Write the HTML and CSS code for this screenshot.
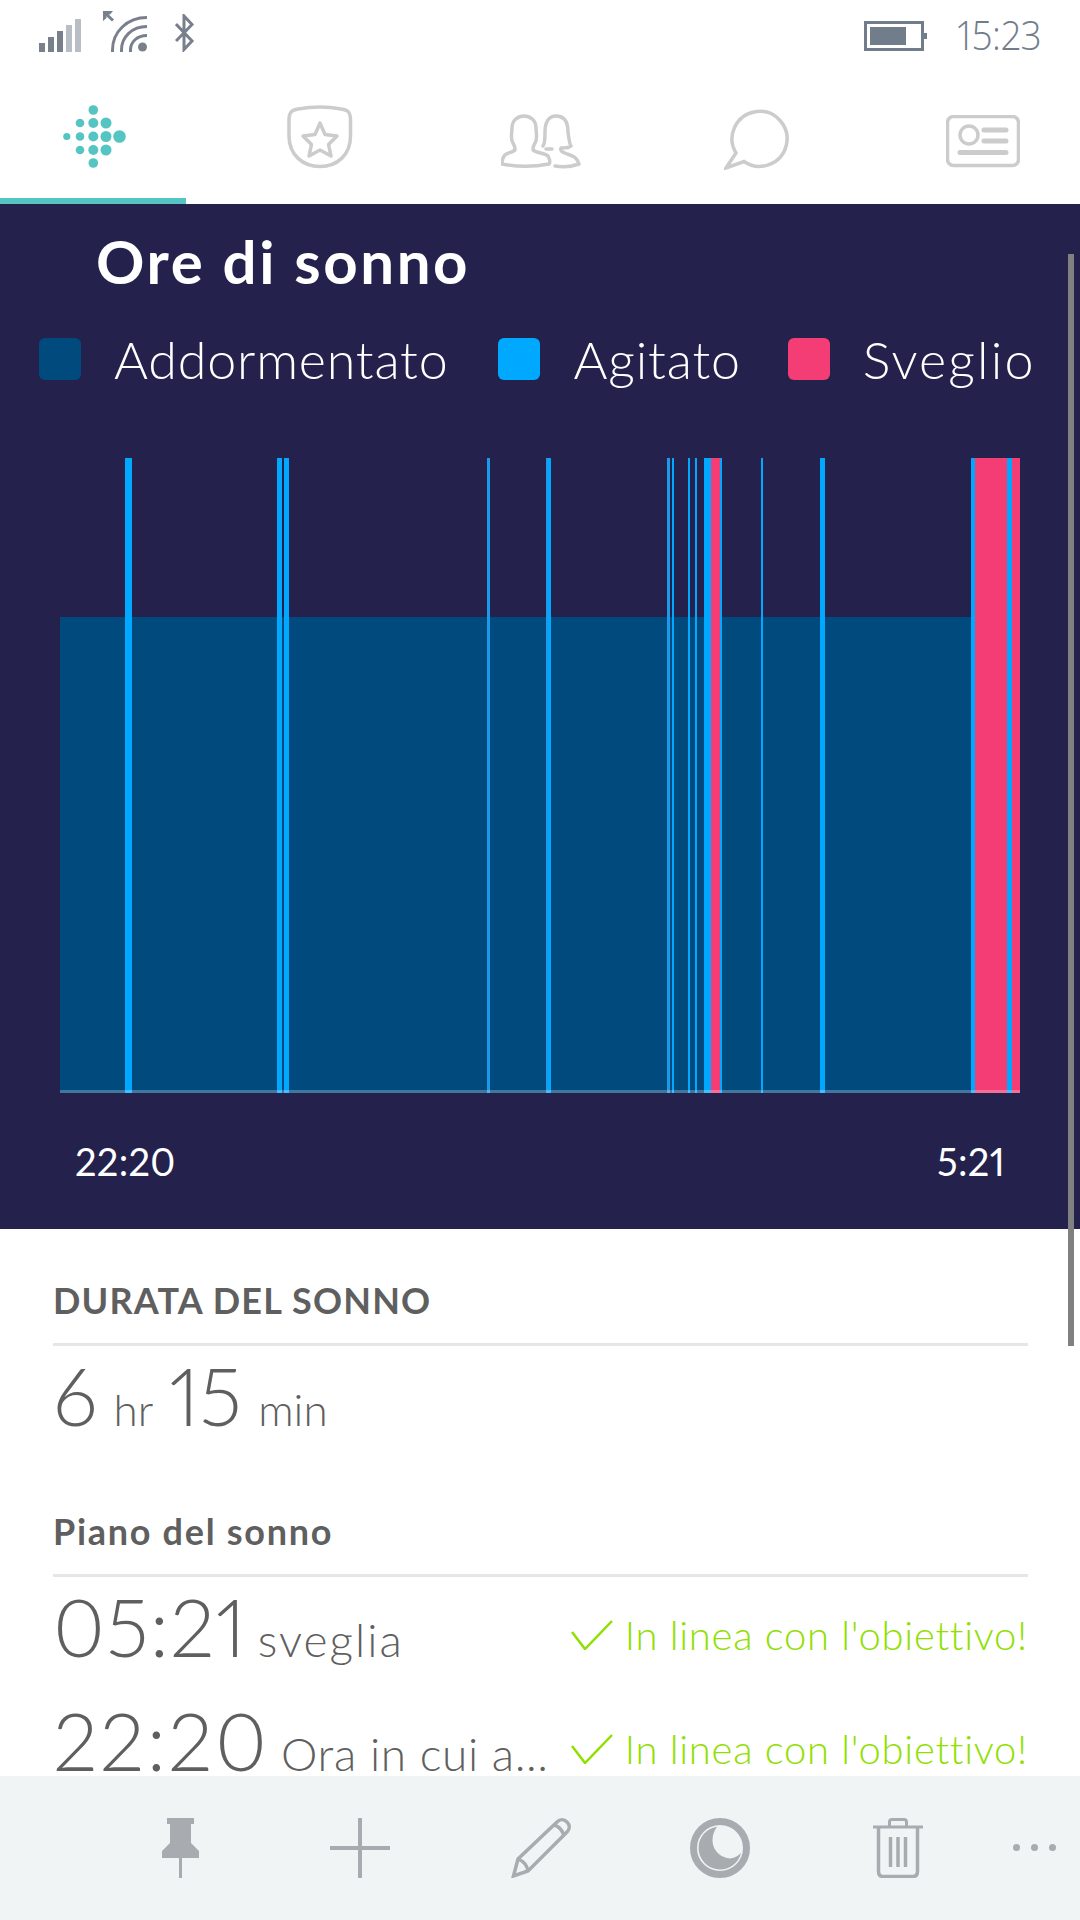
FILE: index.html
```html
<!DOCTYPE html>
<html lang="it">

<head>
  <meta charset="UTF-8" />
  <meta name="viewport" content="width=device-width, initial-scale=1.0" />
  <title>Ore di sonno</title>
  <link rel="stylesheet" href="styles.css">
</head>

<body>
  <div class="screen">
    <div class="status">
      <div class="status-left">
        <svg class="st-signal" width="42" height="33" viewBox="39 19 42 33">
          <rect x="39" y="43" width="6" height="9" fill="#78808c" />
          <rect x="48" y="37" width="6" height="15" fill="#78808c" />
          <rect x="57" y="31" width="6" height="21" fill="#78808c" />
          <rect x="66" y="25" width="6" height="27" fill="#b9bdc5" />
          <rect x="75" y="19" width="6" height="33" fill="#b9bdc5" />
        </svg>
        <svg class="st-wifi" width="46" height="42" viewBox="102 10 46 42">
          <path d="M103 21V11H113L110 14.5H106.5V18Z" fill="#78808c" />
          <path d="M104.5 12.5L113 20.5" stroke="#78808c" stroke-width="3" fill="none" />
          <g fill="none" stroke="#78808c" stroke-width="3">
            <path d="M112.5 52V50C112.500 32 127 17.500 147 17.500" />
            <path d="M121.500 52V50C121.500 37 132 26.500 147 26.500" />
            <path d="M130.500 52V50C130.500 42 137 35.500 147 35.500" />
          </g>
          <circle cx="142.500" cy="47" r="4.500" fill="#78808c" />
        </svg>
        <svg class="st-bt" width="20" height="38" viewBox="175 14 20 38">
          <path d="M176 24L192 41L184 49.500V16L192 24.500L176 41" fill="none" stroke="#78808c" stroke-width="3" />
        </svg>
      </div>
      <div class="status-right">
        <svg width="63" height="30" viewBox="864 21 63 30">
          <rect x="865.500" y="22.500" width="57" height="27" fill="none" stroke="#717d8a" stroke-width="3" />
          <rect x="870" y="27" width="36" height="18" fill="#717d8a" />
          <rect x="924" y="33" width="3" height="6" fill="#717d8a" />
        </svg>
        <span class="clock">15:23</span>
      </div>
    </div>

    <nav class="tabs">
      <div class="tab active">
        <svg width="66" height="66" viewBox="60 104 66 66" fill="#55c5c3">
          <circle cx="93.300" cy="110" r="4.800" />
          <circle cx="93.300" cy="123" r="5" />
          <circle cx="93.300" cy="136.500" r="5" />
          <circle cx="93.300" cy="150" r="5" />
          <circle cx="93.300" cy="163" r="4.800" />
          <circle cx="80" cy="123" r="4.300" />
          <circle cx="80" cy="136.500" r="4.300" />
          <circle cx="80" cy="150" r="4.300" />
          <circle cx="66.800" cy="136.500" r="3.600" />
          <circle cx="106" cy="123" r="5.500" />
          <circle cx="106" cy="136.500" r="5.500" />
          <circle cx="106" cy="150" r="5.500" />
          <circle cx="119.500" cy="136.500" r="6.300" />
        </svg>
      </div>
      <div class="tab">
        <svg width="66" height="65" viewBox="287 105 66 65" fill="none" stroke="#ccc" stroke-width="3.500" stroke-linejoin="round">
          <path d="M289 120C289 112 292 110 298 109C312 106.500 328 106.500 341 109C348 110 350.500 112 350.500 120V136C350.500 155 337 166.500 320 166.500C303 166.500 289 155 289 136Z" />
          <path d="M320 123L325 134.500L337 136L328.500 144.500L331 156L320 150L309 156L311.500 144.500L303 136L315 134.500Z" />
        </svg>
      </div>
      <div class="tab">
        <svg width="80" height="56" viewBox="502 114 80 56" fill="none" stroke="#ccc" stroke-width="3.500" stroke-linejoin="round" stroke-linecap="round">
          <path d="M516 150C516 147 516 146 514 143C511 139 513 133 513 128C513 120 519 116 525 116C531 116 537 120 537 128C537 133 539 139 536 143C534 146 534 147 534 150C537 153 546 153 549 156C551 160 551 163 550 164C535 167 518 167 503 164C503 160 504 157 506 155C508 153 512 153 516 150Z" />
          <path d="M544 146C546 144 546 138 546 132C546 122 550 116 557 116C565 116 569 122 569 132C570 140 571 145 572 146C570 148 566 148 562 148C561 151 563 152 568 154C574 156 578 157 580 164C572 167 563 167 556 166" />
          <path d="M547 149H553" />
        </svg>
      </div>
      <div class="tab">
        <svg width="66" height="61" viewBox="724 109 66 61" fill="none" stroke="#ccc" stroke-width="3.500">
          <path d="M736 153L726 168L744 161.500A27.500 27.500 0 1 0 736 153Z" stroke-linejoin="miter" />
        </svg>
      </div>
      <div class="tab">
        <svg width="74" height="55" viewBox="946 115 74 55" fill="none" stroke="#ccc">
          <rect x="947.500" y="116.500" width="71" height="49" rx="6" stroke-width="3.500" />
          <circle cx="969" cy="135" r="9" stroke-width="3.500" />
          <path d="M984 130H1006M984 141H1006M960 152.500H1006" stroke-width="5" stroke-linecap="round" />
        </svg>
      </div>
    </nav>

    <main class="content">
      <section class="sleep-panel">
        <h1 class="panel-title">Ore di sonno</h1>
        <div class="legend">
          <span class="swatch swatch-asleep"></span><span class="legend-label label-asleep">Addormentato</span>
          <span class="swatch swatch-restless"></span><span class="legend-label label-restless">Agitato</span>
          <span class="swatch swatch-awake"></span><span class="legend-label label-awake">Sveglio</span>
        </div>

        <svg class="chart" width="960" height="635" viewBox="60 458 960 635">
          <rect x="60" y="617" width="960" height="476" fill="#004a7e" />
          <g fill="#1a9ae8">
            <rect x="487" y="458" width="3" height="635" />
            <rect x="546" y="458" width="2" height="635" />
            <rect x="667" y="458" width="3" height="635" />
          </g>
          <g fill="#00a8ff">
            <rect x="125" y="458" width="7" height="635" />
            <rect x="277" y="458" width="5" height="635" />
            <rect x="284" y="458" width="5" height="635" />
            <rect x="548" y="458" width="3" height="635" />
            <rect x="672" y="458" width="2" height="635" />
            <rect x="688" y="458" width="2" height="635" />
            <rect x="695" y="458" width="2" height="635" />
            <rect x="704" y="458" width="7" height="635" />
            <rect x="720" y="458" width="2" height="635" />
            <rect x="761" y="458" width="2" height="635" />
            <rect x="820" y="458" width="5" height="635" />
            <rect x="971" y="458" width="4" height="635" />
            <rect x="1007" y="458" width="5" height="635" />
          </g>
          <g fill="#f53d75">
            <rect x="711" y="458" width="9" height="635" />
            <rect x="975" y="458" width="32" height="635" />
            <rect x="1012" y="458" width="8" height="635" />
          </g>
          <rect x="60" y="1090" width="960" height="3" fill="#fff" fill-opacity="0.25" />
        </svg>

        <div class="axis">
          <span>22:20</span>
          <span>5:21</span>
        </div>
      </section>

      <section class="details">
        <h2 class="details-head caps">DURATA DEL SONNO</h2>
        <div class="duration"><span class="big">6</span><span class="unit unit-hr">hr</span><span class="big">15</span><span class="unit unit-min">min</span></div>

        <h2 class="details-head plan">Piano del sonno</h2>
        <div class="plan-row">
          <div class="plan-time"><span class="big">05:21</span><span class="unit plan-label">sveglia</span></div>
          <div class="goal">
            <svg width="42" height="30" viewBox="0 0 42 30" fill="none" stroke="#8fe000" stroke-width="2.500">
              <path d="M1 12L14 29L41 1" />
            </svg>
            <span>In linea con l'obiettivo!</span>
          </div>
        </div>
        <div class="plan-row">
          <div class="plan-time"><span class="big big-wide">22:20</span><span class="unit plan-label plan-label-long">Ora in cui a...</span></div>
          <div class="goal">
            <svg width="42" height="30" viewBox="0 0 42 30" fill="none" stroke="#8fe000" stroke-width="2.500">
              <path d="M1 12L14 29L41 1" />
            </svg>
            <span>In linea con l'obiettivo!</span>
          </div>
        </div>
      </section>

      <div class="scrollbar"></div>
    </main>

    <footer class="appbar">
      <svg width="38" height="60" viewBox="162 1818 38 60" fill="#a8abaf">
        <path d="M167 1818H194V1824H191V1843L199 1851V1858H182V1878H179V1858H162V1851L170 1843V1824H167Z" />
      </svg>
      <svg width="60" height="60" viewBox="330 1818 60 60" fill="#a8abaf">
        <path d="M358 1818H362V1846H390V1850H362V1878H358V1850H330V1846H358Z" />
      </svg>
      <svg width="60" height="60" viewBox="511 1818 60 60" fill="none" stroke="#a8abaf" stroke-width="3.500">
        <path d="M513.500 1876L518 1859L557 1822C560 1819 564 1819 567 1822C570 1825 570 1829 567 1832L528 1871Z" stroke-linejoin="miter" />
        <path d="M518 1859C523 1861 527 1865 528 1871M554 1825C558 1826 562 1830 564 1835" />
      </svg>
      <svg width="60" height="60" viewBox="690 1818 60 60" fill="#a8abaf">
        <circle cx="720" cy="1848" r="26.500" fill="none" stroke="#a8abaf" stroke-width="7" />
        <path d="M717 1826.700C709 1838 712 1852 724 1857C730 1860 736 1858 741 1853A21.500 21.500 0 1 1 717 1826.700Z" />
      </svg>
      <svg width="50" height="60" viewBox="873 1818 50 60" fill="none" stroke="#a8abaf">
        <path d="M873 1827H923" stroke-width="3" />
        <path d="M889.500 1827V1822C889.500 1820 891 1819.500 892 1819.500H904C905 1819.500 906.500 1820 906.500 1822V1827" stroke-width="3" />
        <path d="M878.500 1827V1871C878.500 1875 880 1876.500 883 1876.500H913C916 1876.500 917.500 1875 917.500 1871V1827" stroke-width="3.500" />
        <path d="M890.500 1837V1867M898 1837V1867M905.500 1837V1867" stroke-width="3.500" />
      </svg>
      <div class="dots"><i></i><i></i><i></i></div>
    </footer>
  </div>
</body>

</html>
```

FILE: styles.css
```css
* {
  box-sizing: border-box;
}

body {
  margin: 0;
  background: #fff;
  font-family: Lato, "Open Sans", "Liberation Sans", sans-serif;
  font-variant-numeric: proportional-nums;
  font-variant-ligatures: none;
}

.screen {
  position: relative;
  width: 1080px;
  height: 1920px;
  display: flex;
  flex-direction: column;
  overflow: hidden;
}

svg {
  display: block;
  flex: none;
}

/* status bar */
.status {
  height: 72px;
  display: flex;
  justify-content: space-between;
  align-items: flex-start;
  padding: 10px 39px 0;
}

.status-left {
  display: flex;
  align-items: flex-start;
}

.st-signal {
  margin: 9px 21px 0 0;
}

.st-bt {
  margin: 4px 0 0 27px;
}

.status-right {
  display: flex;
  align-items: flex-start;
}

.status-right svg {
  margin-top: 11px;
}

.clock {
  margin-left: 24px;
  font-family: "Open Sans", sans-serif;
  font-weight: 300;
  font-size: 40px;
  line-height: 50px;
  color: #717d8a;
  transform: scaleX(0.93);
  transform-origin: right center;
}

/* tabs */
.tabs {
  height: 132px;
  display: grid;
  grid-template-columns: 186px 268px 174px 258px 194px;
}

.tab {
  display: flex;
  justify-content: center;
  align-items: flex-end;
  padding-bottom: 34px;
}

.tab.active {
  padding-bottom: 28px;
  border-bottom: 6px solid #55c5c3;
}

/* main */
.content {
  position: relative;
  flex: 1;
  overflow: hidden;
}

.sleep-panel {
  height: 1025px;
  background: #24224d;
  color: #fff;
  padding: 0 60px;
  display: flex;
  flex-direction: column;
}

.panel-title {
  margin: 22px 0 0 36px;
  font-size: 60px;
  line-height: 70px;
  font-weight: 700;
  letter-spacing: 2.6px;
}

.legend {
  display: flex;
  align-items: center;
  margin: 42px 0 0 -21px;
  font-weight: 300;
  font-size: 52px;
  line-height: 42px;
  letter-spacing: 0.8px;
}

.swatch {
  width: 42px;
  height: 42px;
  border-radius: 6px;
  flex: none;
}

.swatch-asleep {
  background: #004a7e;
}

.swatch-restless {
  background: #00a8ff;
}

.swatch-awake {
  background: #f53d75;
}

.legend-label {
  margin-left: 33px;
  white-space: nowrap;
}

.label-asleep {
  margin-right: 50px;
}

.label-restless {
  margin-right: 47px;
}

.label-awake {
  letter-spacing: 2.2px;
}

.chart {
  margin-top: 78px;
}

.axis {
  display: flex;
  justify-content: space-between;
  padding: 0 15px;
  margin-top: 46px;
  font-size: 38px;
  line-height: 44px;
  font-weight: 400;
  letter-spacing: 0.3px;
}

/* details */
.details {
  padding: 0 52px 0 53px;
  color: #5f5f5f;
}

.details-head {
  margin: 0;
  border-bottom: 3px solid #e5e6e7;
  font-weight: 700;
  line-height: 38px;
  height: 65px;
}

.caps {
  margin-top: 52px;
  font-size: 36px;
  letter-spacing: 1.2px;
}

.plan {
  margin-top: 72px;
  font-size: 36px;
  letter-spacing: 1.7px;
}

.plan-time {
  display: flex;
  align-items: baseline;
  white-space: nowrap;
}

.duration {
  margin-top: 4px;
  height: 90px;
  white-space: nowrap;
  line-height: 90px;
}

.big {
  font-size: 80px;
  line-height: 90px;
  font-weight: 300;
}

.unit {
  font-size: 44px;
  line-height: 50px;
  font-weight: 300;
}

.unit-hr {
  margin: 0 16px;
}

.unit-min {
  margin-left: 16px;
}

.plan-row {
  display: flex;
  justify-content: space-between;
  align-items: flex-start;
  height: 114px;
  padding-top: 4px;
}

.plan-time .big {
  letter-spacing: 1px;
}

.plan-time .big-wide {
  letter-spacing: 2.2px;
}

.plan-label {
  margin-left: 11px;
  font-size: 46px;
  letter-spacing: 2px;
}

.plan-label-long {
  margin-left: 12px;
  letter-spacing: 0.6px;
}

.goal {
  display: flex;
  align-items: baseline;
  gap: 12px;
  margin-top: 31px;
  color: #8fe000;
  font-size: 40px;
  line-height: 46px;
  font-weight: 300;
  letter-spacing: 0.7px;
  white-space: nowrap;
}

.goal svg {
  margin-bottom: 9px;
}

.scrollbar {
  position: absolute;
  right: 6px;
  top: 50px;
  width: 6px;
  height: 1092px;
  background: #808080;
}

/* app bar */
.appbar {
  position: relative;
  height: 144px;
  flex: none;
  background: #f0f4f5;
  display: flex;
  align-items: flex-start;
  padding: 42px 0 0 162px;
  gap: 0;
}

.appbar svg:nth-child(2) {
  margin-left: 130px;
}

.appbar svg:nth-child(3) {
  margin-left: 121px;
}

.appbar svg:nth-child(4) {
  margin-left: 119px;
}

.appbar svg:nth-child(5) {
  margin-left: 123px;
}

.dots {
  display: flex;
  gap: 11px;
  margin: 26px 0 0 90px;
}

.dots i {
  width: 7px;
  height: 7px;
  border-radius: 50%;
  background: #a8abaf;
}
```
